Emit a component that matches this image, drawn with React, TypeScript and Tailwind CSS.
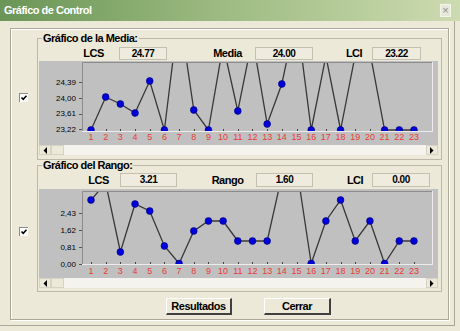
import React from "react";

const meanPts = [69, 36, 43, 52, 20, 69, -51, 49, 69, -16, 50, -23, 63, 23, -46, 69, -5, 69, -6, -9, 69, 69, 69];
const rangePts = [11, -6, 63, 15, 22, 57, 74.5, 42, 32, 32, 52, 52, 52, -13, -23, 74.5, 32, 11, 52, 32, 74.5, 52, 52];

type ChartProps = {
  id: string;
  h: number;
  top: number;
  bottom: number;
  pts: number[];
  yLabels: { t: string; y: number }[];
  labelY: number;
};

function Chart({ id, h, top, bottom, pts, yLabels, labelY }: ChartProps) {
  const W = 399;
  const L = 44;
  const R = 393;
  const xs = pts.map((_, i) => 52 + i * 14.68);
  const d = pts.map((y, i) => `${i ? "L" : "M"}${xs[i].toFixed(1)} ${y}`).join(" ");
  return (
    <svg width={W} height={h} className="block">
      <defs>
        <clipPath id={id}>
          <rect x={L} y={top} width={R - L} height={bottom - top} />
        </clipPath>
      </defs>
      <rect width={W} height={h} fill="#c0c0c0" />
      <line x1={L - 0.5} y1={top - 0.5} x2={R + 0.5} y2={top - 0.5} stroke="#8c8c8c" />
      <line x1={L - 0.5} y1={top - 0.5} x2={L - 0.5} y2={bottom + 0.5} stroke="#8c8c8c" />
      <line x1={L - 1} y1={bottom + 0.5} x2={R + 1} y2={bottom + 0.5} stroke="#ececec" />
      <line x1={R + 0.5} y1={top - 1} x2={R + 0.5} y2={bottom + 1} stroke="#ececec" />
      {yLabels.map((l) => (
        <g key={l.t}>
          <line x1={L - 4} y1={Math.round(l.y) + 0.5} x2={L - 1} y2={Math.round(l.y) + 0.5} stroke="#555" />
          <text x={37} y={l.y + 2.9} fontSize={8} textAnchor="end" fill="#000">
            {l.t}
          </text>
        </g>
      ))}
      {xs.map((x, i) => (
        <g key={i}>
          <line x1={Math.round(x) + 0.5} y1={bottom - 2} x2={Math.round(x) + 0.5} y2={bottom} stroke="#444" />
          <text x={x} y={labelY} fontSize={9} textAnchor="middle" fill="#ea3b35">
            {i + 1}
          </text>
        </g>
      ))}
      <g clipPath={`url(#${id})`}>
        <path d={d} fill="none" stroke="#383838" strokeWidth={1.3} />
        {pts.map((y, i) => (
          <circle key={i} cx={xs[i]} cy={y} r={3.4} fill="#0000dc" stroke="#00006e" strokeWidth={0.6} />
        ))}
      </g>
    </svg>
  );
}

function Arrow({ dir }: { dir: "l" | "r" }) {
  return (
    <svg width="4" height="7" viewBox="0 0 4 7" className="block">
      {dir === "l" ? <polygon points="4,0 4,7 0.5,3.5" fill="#000" /> : <polygon points="0,0 0,7 3.5,3.5" fill="#000" />}
    </svg>
  );
}

function ScrollBar() {
  return (
    <div className="flex h-[10px] w-[399px] bg-[#f4f3ee]">
      <div className="flex w-[12px] items-center justify-center border border-[#d6d3c4] bg-[#ece9d8]">
        <Arrow dir="l" />
      </div>
      <div className="w-[13px] border border-[#d6d3c4] bg-[#ece9d8]" />
      <div className="flex-1" />
      <div className="flex w-[12px] items-center justify-center border border-[#d6d3c4] bg-[#ece9d8]">
        <Arrow dir="r" />
      </div>
    </div>
  );
}

function CheckBox({ mt }: { mt: string }) {
  return (
    <div className={`ml-[8px] h-[9px] w-[9px] border-l border-t border-[#8a8a8a] bg-white ${mt}`}>
      <svg width="8" height="8" viewBox="0 0 8 8" className="block">
        <path d="M1.5 3.5 L3.2 5.3 L6.5 1.8" fill="none" stroke="#000" strokeWidth={1.6} />
      </svg>
    </div>
  );
}

const lbl = "text-center text-[11px] font-bold tracking-[-0.5px] leading-none text-black";
const box =
  "flex items-center justify-center border border-[#c3c0b2] bg-[#efecdf] text-[10px] font-bold tracking-[-0.5px] leading-none text-black";

export default function App() {
  return (
    <div className="h-[331px] w-[460px] overflow-hidden bg-[#ece9d8] font-['Liberation_Sans',Arial,sans-serif]">
      <div className="flex h-[21px] items-center justify-between bg-linear-to-r from-[#6a9556] via-[#9fbc84] to-[#cddbb0] pl-[4px] pr-[9px]">
        <span className="text-[11px] font-bold tracking-[-0.5px] text-white">Gráfico de Control</span>
        <div className="flex h-[13px] w-[11px] items-center justify-center border border-[#f4f4ec] bg-[#e6e9da] text-[11px] leading-none text-[#8c8c8c]">
          ×
        </div>
      </div>
      <div className="h-[305px] w-[455px] border-b border-r border-[#aaa796] pl-[10px] pt-[7px]">
        <div className="flex h-[292px] w-[439px] flex-col border border-[#aca899] pt-[4px] shadow-[inset_1px_1px_0_#fff,1px_1px_0_#fff]">
          <div className="flex">
            <div className="w-[26px]">
              <CheckBox mt="mt-[60px]" />
            </div>
            <fieldset className="w-[405px] border border-[#bcb9aa] pb-[4px]">
              <legend className="ml-[4px] px-[1px] text-[11px] font-bold leading-[11px] tracking-[-0.5px] text-black">
                Gráfico de la Media:
              </legend>
              <div className="mt-[3px] flex h-[13px] items-center">
                <div className={`ml-[35px] w-[41px] ${lbl}`}>LCS</div>
                <div className={`ml-[5px] h-[13px] w-[48px] ${box}`}>24.77</div>
                <div className={`ml-[40px] w-[41px] ${lbl}`}>Media</div>
                <div className={`ml-[7px] h-[13px] w-[58px] ${box}`}>24.00</div>
                <div className={`ml-[31px] w-[20px] ${lbl}`}>LCI</div>
                <div className={`ml-[8px] h-[13px] w-[49px] ${box}`}>23.22</div>
              </div>
              <div className="ml-[1px] mt-[1px]">
                <Chart
                  id="cm"
                  h={84}
                  top={2}
                  bottom={70}
                  pts={meanPts}
                  yLabels={[
                    { t: "24,39", y: 21.3 },
                    { t: "24,00", y: 36.9 },
                    { t: "23,61", y: 52.5 },
                    { t: "23,22", y: 68.1 },
                  ]}
                  labelY={79}
                />
                <ScrollBar />
              </div>
            </fieldset>
          </div>
          <div className="flex">
            <div className="w-[26px]">
              <CheckBox mt="mt-[67px]" />
            </div>
            <fieldset className="w-[405px] border border-[#bcb9aa] pb-[2px]">
              <legend className="ml-[4px] px-[1px] text-[11px] font-bold leading-[11px] tracking-[-0.5px] text-black">
                Gráfico del Rango:
              </legend>
              <div className="mt-[2px] flex h-[14px] items-center">
                <div className={`ml-[40px] w-[41px] ${lbl}`}>LCS</div>
                <div className={`ml-[1px] h-[14px] w-[57px] ${box}`}>3.21</div>
                <div className={`ml-[30px] w-[41px] ${lbl}`}>Rango</div>
                <div className={`ml-[8px] h-[14px] w-[57px] ${box}`}>1.60</div>
                <div className={`ml-[32px] w-[20px] ${lbl}`}>LCI</div>
                <div className={`ml-[7px] h-[14px] w-[58px] ${box}`}>0.00</div>
              </div>
              <div className="ml-[1px] mt-[2px]">
                <Chart
                  id="cr"
                  h={89}
                  top={3}
                  bottom={75}
                  pts={rangePts}
                  yLabels={[
                    { t: "2,43", y: 23.7 },
                    { t: "1,62", y: 41 },
                    { t: "0,81", y: 57.7 },
                    { t: "0,00", y: 75 },
                  ]}
                  labelY={85}
                />
                <div className="h-[11px]">
                  <ScrollBar />
                </div>
              </div>
            </fieldset>
          </div>
          <div className="mt-[6px] flex">
            <button className="ml-[155px] flex h-[17px] w-[66px] items-center justify-center border-b-2 border-l border-r-2 border-t border-b-[#404040] border-l-white border-r-[#404040] border-t-white bg-[#ece9d8] text-[11px] font-bold leading-none tracking-[-0.5px] text-black">
              Resultados
            </button>
            <button className="ml-[32px] flex h-[17px] w-[67px] items-center justify-center border-b-2 border-l border-r-2 border-t border-b-[#404040] border-l-white border-r-[#404040] border-t-white bg-[#ece9d8] text-[11px] font-bold leading-none tracking-[-0.5px] text-black">
              Cerrar
            </button>
          </div>
        </div>
      </div>
    </div>
  );
}
